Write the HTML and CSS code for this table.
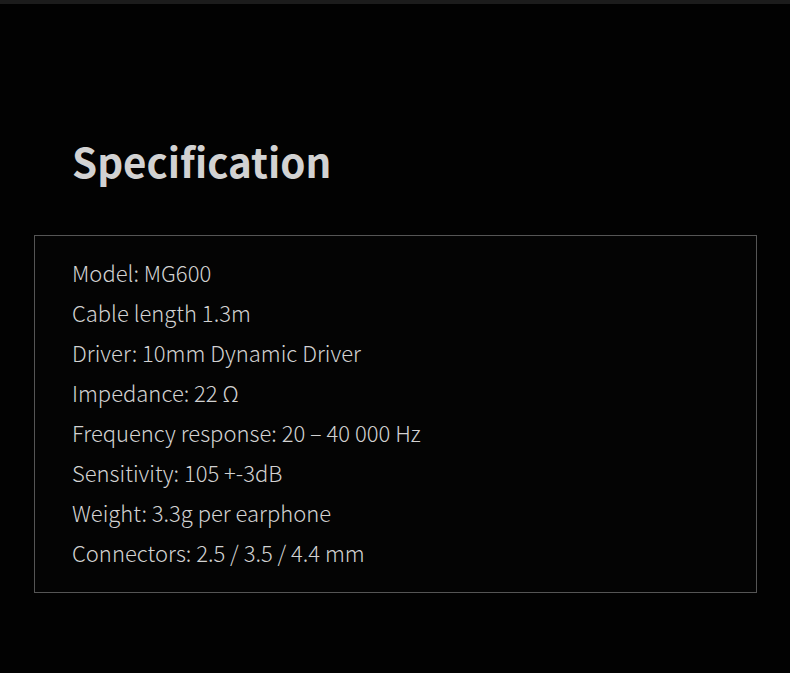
FILE: index.html
```html
<!DOCTYPE html>
<html>
<head>
<meta charset="utf-8">
<link rel="stylesheet" href="styles.css">
</head>
<body>
<div class="topbar"></div>
<main class="page">
  <h1 class="title">Specification</h1>
  <section class="spec-box">
    <ul class="spec-list">
      <li>Model: MG600</li>
      <li>Cable length 1.3m</li>
      <li>Driver: 10mm Dynamic Driver</li>
      <li>Impedance: 22 Ω</li>
      <li>Frequency response: 20 – 40 000 Hz</li>
      <li>Sensitivity: 105 +-3dB</li>
      <li>Weight: 3.3g per earphone</li>
      <li>Connectors: 2.5 / 3.5 / 4.4 mm</li>
    </ul>
  </section>
</main>
</body>
</html>
```

FILE: styles.css
```css
html, body {
  margin: 0;
  padding: 0;
  background: #020202;
  height: 100%;
}
body {
  font-family: "Noto Sans CJK JP", "Source Sans Pro", "Noto Sans", sans-serif;
  color: #c9c9c9;
}
.topbar {
  height: 4px;
  background: #1c1c1c;
}
.page {
  padding: 0 32px 0 34px;
}
.title {
  margin: 0;
  padding: 129px 0 0 38px;
  height: 102px;
  box-sizing: content-box;
  font-size: 40.3px;
  line-height: 56px;
  font-weight: 700;
  color: #d2d2d2;
}
.spec-box {
  width: 723px;
  box-sizing: border-box;
  border: 1px solid #555;
  background: #040404;
  padding: 16px 0 20px 37px;
}
.spec-list {
  list-style: none;
  margin: 0;
  padding: 0;
}
.spec-list li {
  font-size: 22px;
  font-weight: 300;
  line-height: 40px;
  color: #d2d2d2;
}
```
